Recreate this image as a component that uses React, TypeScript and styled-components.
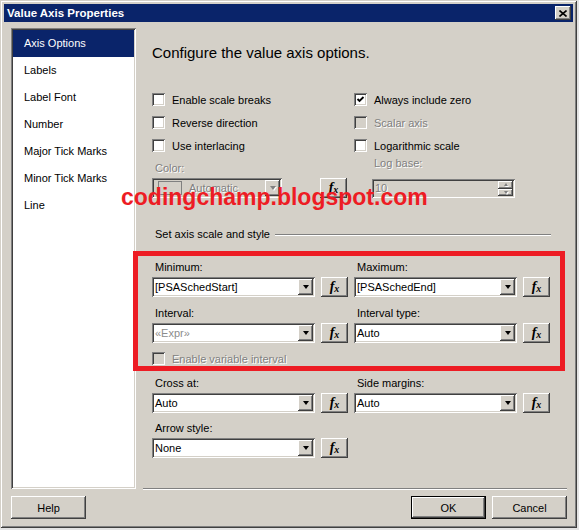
import React from 'react';
import styled, { createGlobalStyle, css } from 'styled-components';

const FACE = '#d4d0c8';
const SHADOW = '#808080';
const DARK = '#404040';
const NAVY = '#0a246a';
const RED = '#ed1c24';

const raised = css`
  box-shadow: inset -1px -1px ${DARK}, inset 1px 1px #fff, inset -2px -2px ${SHADOW},
    inset 2px 2px ${FACE};
`;

const sunken = css`
  box-shadow: inset 1px 1px ${SHADOW}, inset -1px -1px #fff, inset 2px 2px ${DARK},
    inset -2px -2px ${FACE};
`;

const disabledText = css`
  color: ${SHADOW};
  text-shadow: 1px 1px 0 #fff;
`;

const GlobalStyle = createGlobalStyle`
  html, body {
    margin: 0;
    padding: 0;
    background: #e4e4e4;
  }
  body {
    font-family: "Liberation Sans", Arial, sans-serif;
    font-size: 11px;
    color: #000;
  }
  * { box-sizing: border-box; }
`;

const Window = styled.div`
  position: relative;
  width: 577px;
  height: 528px;
  padding: 4px;
  background: ${FACE};
  display: flex;
  flex-direction: column;
  box-shadow: inset 1px 1px ${FACE}, inset -1px -1px ${DARK}, inset 2px 2px #fff,
    inset -2px -2px ${SHADOW};
`;

const TitleBar = styled.div`
  height: 18px;
  background: ${NAVY};
  display: flex;
  align-items: center;
  justify-content: space-between;
  padding: 0 2px 0 3px;
  color: #fff;
  font-weight: bold;
  font-size: 11.5px;
`;

const CloseButton = styled.div`
  width: 16px;
  height: 14px;
  background: ${FACE};
  ${raised}
  display: flex;
  align-items: center;
  justify-content: center;
`;

const Body = styled.div`
  flex: 1;
  display: flex;
  flex-direction: column;
  padding: 6px 6px 0 7px;
`;

const Main = styled.div`
  display: flex;
  gap: 7px;
  height: 461px;
`;

const Sidebar = styled.div`
  width: 125px;
  padding: 2px;
  background: #fff;
  ${sunken}
`;

const NavItem = styled.div<{ $active?: boolean }>`
  height: 27px;
  line-height: 27px;
  padding-left: 11px;
  background: ${(p) => (p.$active ? NAVY : 'transparent')};
  color: ${(p) => (p.$active ? '#fff' : '#000')};
`;

const Content = styled.div`
  flex: 1;
  position: relative;
  display: flex;
  flex-direction: column;
  padding-left: 9px;
  border-bottom: 1px solid ${SHADOW};
  box-shadow: 0 1px 0 #fff;
`;

const Heading = styled.div`
  margin-top: 16px;
  font-size: 15px;
  line-height: 18px;
`;

const TwoCols = styled.div<{ $top?: number }>`
  display: grid;
  grid-template-columns: 202px 1fr;
  margin-top: ${(p) => p.$top ?? 0}px;
`;

const CheckGrid = styled(TwoCols)`
  grid-auto-rows: 23px;
`;

const CheckRow = styled.div<{ $disabled?: boolean }>`
  display: flex;
  align-items: center;
  gap: 7px;
  ${(p) => p.$disabled && disabledText}
`;

const Box = styled.span<{ $disabled?: boolean }>`
  width: 13px;
  height: 13px;
  padding: 2px;
  flex: none;
  display: flex;
  background: ${(p) => (p.$disabled ? FACE : '#fff')};
  ${sunken}
`;

const Label = styled.div<{ $disabled?: boolean; $top?: number; $bottom?: number; $indent?: number }>`
  line-height: 14px;
  padding-left: ${(p) => p.$indent ?? 3}px;
  margin-top: ${(p) => p.$top ?? 0}px;
  margin-bottom: ${(p) => p.$bottom ?? 3}px;
  ${(p) => p.$disabled && disabledText}
`;

const Cell = styled.div<{ $indent?: number }>`
  padding-left: ${(p) => p.$indent ?? 0}px;
`;

const ComboRow = styled.div<{ $span?: number }>`
  display: flex;
  gap: 6px;
  justify-content: ${(p) => (p.$span ? 'space-between' : 'flex-start')};
  width: ${(p) => (p.$span ? `${p.$span}px` : 'auto')};
`;

const ComboBox = styled.div<{ $width?: number; $disabled?: boolean }>`
  width: ${(p) => p.$width ?? 163}px;
  height: 20px;
  padding: 2px;
  display: flex;
  align-items: center;
  background: ${(p) => (p.$disabled ? FACE : '#fff')};
  ${sunken}
`;

const ComboText = styled.span<{ $muted?: boolean }>`
  flex: 1;
  padding-left: 1px;
  white-space: nowrap;
  overflow: hidden;
  color: ${(p) => (p.$muted ? '#8c8c8c' : '#000')};
`;

const DropButton = styled.span`
  width: 15px;
  height: 16px;
  flex: none;
  background: ${FACE};
  ${raised}
  display: flex;
  align-items: center;
  justify-content: center;
`;

const Arrow = styled.span<{ $disabled?: boolean; $size?: number }>`
  width: 0;
  height: 0;
  border-left: ${(p) => p.$size ?? 3.5}px solid transparent;
  border-right: ${(p) => p.$size ?? 3.5}px solid transparent;
  border-top: ${(p) => (p.$size ?? 3.5) + 0.5}px solid ${(p) => (p.$disabled ? SHADOW : '#000')};
  filter: ${(p) => (p.$disabled ? 'drop-shadow(1px 1px 0 #fff)' : 'none')};
`;

const ArrowUp = styled(Arrow)`
  border-top: none;
  border-bottom: ${(p) => (p.$size ?? 3.5) + 0.5}px solid ${(p) => (p.$disabled ? SHADOW : '#000')};
`;

const Swatch = styled.span`
  width: 24px;
  height: 14px;
  margin: 0 6px 0 4px;
  border: 1px solid ${SHADOW};
  flex: none;
`;

const FxButton = styled.div`
  width: 27px;
  height: 20px;
  flex: none;
  background: ${FACE};
  ${raised}
  display: flex;
  align-items: center;
  justify-content: center;
  font-family: "Liberation Serif", "Times New Roman", serif;
  font-weight: bold;
  font-style: italic;
  font-size: 14px;
  line-height: 1;

  & > span {
    font-size: 10px;
    position: relative;
    top: 2px;
  }
`;

const SpinBox = styled.div`
  width: 143px;
  height: 19px;
  padding: 2px;
  display: flex;
  background: ${FACE};
  ${sunken}
`;

const SpinValue = styled.span`
  flex: 1;
  padding-left: 1px;
  line-height: 15px;
  ${disabledText}
`;

const SpinButtons = styled.span`
  width: 15px;
  display: flex;
  flex-direction: column;
`;

const SpinButton = styled.span`
  flex: 1;
  background: ${FACE};
  ${raised}
  display: flex;
  align-items: center;
  justify-content: center;
`;

const Section = styled.div`
  margin-top: 29px;
  display: flex;
  align-items: center;
  gap: 5px;
  padding-left: 3px;
  line-height: 14px;
`;

const SectionLine = styled.span`
  flex: 1;
  height: 1px;
  margin-right: 16px;
  background: ${SHADOW};
  box-shadow: 0 1px 0 #fff;
`;

const Footer = styled.div`
  margin-top: 7px;
  display: flex;
  justify-content: space-between;
`;

const ButtonGroup = styled.div`
  display: flex;
  gap: 6px;
`;

const PushButton = styled.div<{ $default?: boolean }>`
  width: 75px;
  height: 23px;
  display: flex;
  align-items: center;
  justify-content: center;
  background: ${FACE};
  ${(p) =>
    p.$default
      ? css`
          box-shadow: inset 0 0 0 1px #000, inset -2px -2px ${DARK}, inset 2px 2px #fff,
            inset -3px -3px ${SHADOW};
        `
      : raised}
`;

const Watermark = styled.div`
  position: absolute;
  left: 121px;
  top: 186px;
  font-weight: bold;
  font-size: 23px;
  line-height: 23px;
  color: ${RED};
  white-space: nowrap;
  pointer-events: none;
`;

const Highlight = styled.div`
  position: absolute;
  left: 133px;
  top: 251px;
  width: 432px;
  height: 120px;
  border: 5px solid ${RED};
  pointer-events: none;
`;

const Check = ({ checked, disabled }: { checked?: boolean; disabled?: boolean }) => (
  <Box $disabled={disabled}>
    {checked && (
      <svg width="9" height="9" viewBox="0 0 9 9">
        <polyline points="1.5,4 3.5,6 7.5,2" fill="none" stroke="#000" strokeWidth="1.8" />
      </svg>
    )}
  </Box>
);

const CheckItem = ({
  label,
  checked,
  disabled,
}: {
  label: string;
  checked?: boolean;
  disabled?: boolean;
}) => (
  <CheckRow $disabled={disabled}>
    <Check checked={checked} disabled={disabled} />
    {label}
  </CheckRow>
);

const Combo = ({ value, muted }: { value: string; muted?: boolean }) => (
  <ComboBox>
    <ComboText $muted={muted}>{value}</ComboText>
    <DropButton>
      <Arrow />
    </DropButton>
  </ComboBox>
);

const Fx = () => (
  <FxButton>
    f<span>x</span>
  </FxButton>
);

const Field = ({ label, value, muted }: { label: string; value: string; muted?: boolean }) => (
  <Cell>
    <Label>{label}</Label>
    <ComboRow>
      <Combo value={value} muted={muted} />
      <Fx />
    </ComboRow>
  </Cell>
);

const navItems = [
  'Axis Options',
  'Labels',
  'Label Font',
  'Number',
  'Major Tick Marks',
  'Minor Tick Marks',
  'Line',
];

export default function App() {
  return (
    <>
      <GlobalStyle />
      <Window>
        <TitleBar>
          Value Axis Properties
          <CloseButton>
            <svg width="8" height="7" viewBox="0 0 8 7">
              <path d="M0.5 0.5L7.5 6.5M7.5 0.5L0.5 6.5" stroke="#000" strokeWidth="1.6" />
            </svg>
          </CloseButton>
        </TitleBar>
        <Body>
          <Main>
            <Sidebar>
              {navItems.map((item, i) => (
                <NavItem key={item} $active={i === 0}>
                  {item}
                </NavItem>
              ))}
            </Sidebar>
            <Content>
              <Heading>Configure the value axis options.</Heading>
              <CheckGrid $top={26}>
                <CheckItem label="Enable scale breaks" />
                <CheckItem label="Always include zero" checked />
                <CheckItem label="Reverse direction" />
                <CheckItem label="Scalar axis" disabled />
                <CheckItem label="Use interlacing" />
                <CheckItem label="Logarithmic scale" />
              </CheckGrid>
              <TwoCols>
                <Cell>
                  <Label $disabled $top={4}>
                    Color:
                  </Label>
                  <ComboRow $span={195}>
                    <ComboBox $width={130} $disabled>
                      <Swatch />
                      <ComboText>
                        <Label as="span" $disabled $indent={0} $bottom={0}>
                          Automatic
                        </Label>
                      </ComboText>
                      <DropButton>
                        <Arrow $disabled />
                      </DropButton>
                    </ComboBox>
                    <Fx />
                  </ComboRow>
                </Cell>
                <Cell $indent={18}>
                  <Label $disabled $top={-1} $bottom={9} $indent={2}>
                    Log base:
                  </Label>
                  <SpinBox>
                    <SpinValue>10</SpinValue>
                    <SpinButtons>
                      <SpinButton>
                        <ArrowUp $disabled $size={2.5} />
                      </SpinButton>
                      <SpinButton>
                        <Arrow $disabled $size={2.5} />
                      </SpinButton>
                    </SpinButtons>
                  </SpinBox>
                </Cell>
              </TwoCols>
              <Section>
                Set axis scale and style
                <SectionLine />
              </Section>
              <TwoCols $top={19}>
                <Field label="Minimum:" value="[PSASchedStart]" />
                <Field label="Maximum:" value="[PSASchedEnd]" />
              </TwoCols>
              <TwoCols $top={9}>
                <Field label="Interval:" value="«Expr»" muted />
                <Field label="Interval type:" value="Auto" />
              </TwoCols>
              <TwoCols $top={9}>
                <CheckItem label="Enable variable interval" disabled />
              </TwoCols>
              <TwoCols $top={11}>
                <Field label="Cross at:" value="Auto" />
                <Field label="Side margins:" value="Auto" />
              </TwoCols>
              <TwoCols $top={8}>
                <Field label="Arrow style:" value="None" />
              </TwoCols>
            </Content>
          </Main>
          <Footer>
            <PushButton>Help</PushButton>
            <ButtonGroup>
              <PushButton $default>OK</PushButton>
              <PushButton>Cancel</PushButton>
            </ButtonGroup>
          </Footer>
        </Body>
        <Watermark>codingchamp.blogspot.com</Watermark>
        <Highlight />
      </Window>
    </>
  );
}
